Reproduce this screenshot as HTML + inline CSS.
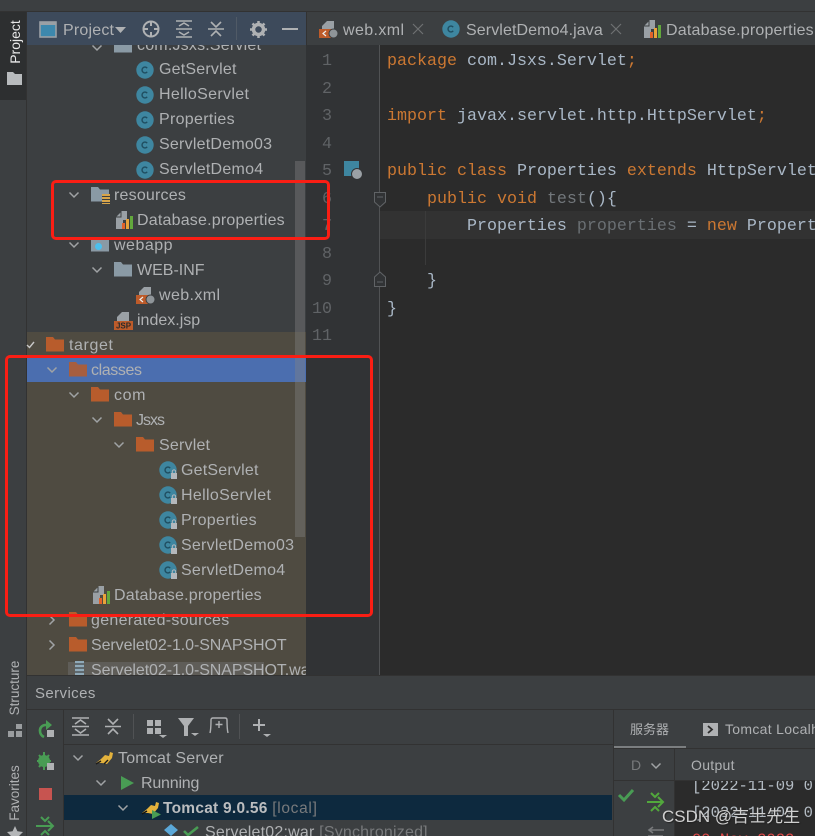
<!DOCTYPE html>
<html><head><meta charset="utf-8"><style>
html,body{margin:0;padding:0;width:815px;height:836px;overflow:hidden;background:#3c3f41}
#w{position:absolute;left:0;top:0;width:815px;height:836px;overflow:hidden;background:#3c3f41;font-family:"Liberation Sans","Noto Sans CJK SC",sans-serif;color:#afb1b3}
.a{position:absolute}
.t{position:absolute;font-size:16px;line-height:20px;white-space:nowrap;color:#afb1b3;margin-top:1px;letter-spacing:.2px}
.c{position:absolute;left:387px;font:16.67px/20px "Liberation Mono",monospace;white-space:pre;color:#a9b7c6;margin-top:2px}
.n{position:absolute;left:306px;width:26px;text-align:right;font:16.67px/20px "Liberation Mono",monospace;color:#606366;margin-top:2px}
.k{color:#cc7832}
.r{position:absolute;border:3.5px solid #fa1e14;border-radius:5px;box-sizing:border-box}
svg{position:absolute;overflow:visible}
</style></head><body><div id="w">
<svg width="0" height="0" style="position:absolute"><defs>
<symbol id="dn" viewBox="0 0 12 12"><path d="M1.5 3.5 6 8 10.5 3.5" fill="none" stroke="#a0a3a5" stroke-width="1.5"/></symbol>
<symbol id="rt" viewBox="0 0 12 12"><path d="M3.5 1.5 8 6 3.5 10.5" fill="none" stroke="#a0a3a5" stroke-width="1.5"/></symbol>
<symbol id="fo" viewBox="0 0 18 16"><path d="M0 0H7L9 2.500H18V14.500H0Z" fill="#b85c2c"/></symbol>
<symbol id="fg" viewBox="0 0 18 16"><path d="M0 0H7L9 2.500H18V14.500H0Z" fill="#8a9aa5"/></symbol>
<symbol id="cl" viewBox="0 0 18 18"><circle cx="9" cy="9" r="8.7" fill="#3e86a0"/><path d="M11.2 7.200A2.900 2.900 0 1 0 11.200 10.800" fill="none" stroke="#1f4d60" stroke-width="1.4"/></symbol>
<symbol id="cll" viewBox="0 0 18 18"><circle cx="9" cy="9" r="8.7" fill="#3e86a0"/><path d="M11.2 7.200A2.900 2.900 0 1 0 11.200 10.800" fill="none" stroke="#1f4d60" stroke-width="1.4"/><rect x="12" y="12" width="6" height="6" fill="#b4b8bc"/><path d="M13.300 12V10.600A1.700 1.700 0 0 1 16.700 10.600V12" fill="none" stroke="#b4b8bc" stroke-width="1"/></symbol>
<symbol id="pr" viewBox="0 0 17 18"><path d="M0 6 6 0H11V9H7V18H0Z" fill="#9aa0a5"/><path d="M5 1V6H0" fill="none" stroke="#3c3f41"/><rect x="6" y="12" width="3" height="6" fill="#e0622a"/><rect x="10" y="8" width="3" height="10" fill="#e8a33a"/><rect x="14" y="5" width="3" height="13" fill="#62a83c"/></symbol>
<symbol id="xm" viewBox="0 0 19 18"><path d="M3 6 8 1H15V9H3Z" fill="#9aa0a5"/><rect y="9" width="14" height="9" fill="#bd5b2a"/><path d="M7 11 4 13.500 7 16" fill="none" stroke="#eee" stroke-width="1.2"/><circle cx="14.500" cy="13.500" r="4.500" fill="#8f9599" stroke="#3c3f41"/></symbol>
</defs></svg>

<!-- top bar -->
<div class="a" style="left:0;top:0;width:815px;height:11px;background:#3c3f41;border-bottom:1px solid #323232"></div>
<!-- left stripe -->
<div class="a" style="left:0;top:12px;width:27px;height:88px;background:#2d2f30"></div>
<div class="a" style="left:26px;top:12px;width:1px;height:824px;background:#323232"></div>
<div class="t" style="left:-15px;top:32px;width:60px;text-align:center;font-size:14px;color:#e8e8e8;transform:rotate(-90deg);margin:0;letter-spacing:0">Project</div>
<svg style="left:7px;top:72px" width="15" height="13" viewBox="0 0 15 13"><path d="M0 0H6L8 2H15V13H0Z" fill="#b8bbbd"/></svg>

<!-- project tree bg -->
<div class="a" style="left:27px;top:12px;width:279px;height:664px;background:#3c3f41"></div>
<div class="a" style="left:27px;top:332px;width:279px;height:344px;background:#4f4b41"></div>
<div class="a" style="left:27px;top:357px;width:279px;height:25px;background:#4b6eaf"></div>

<!-- tree rows -->
<svg style="left:91px;top:42px" width="12" height="12"><use href="#dn"/></svg>
<svg style="left:114px;top:38px" width="18" height="16"><use href="#fg"/></svg>
<div class="t" style="left:137px;top:35px">com.Jsxs.Servlet</div>
<svg style="left:136px;top:61px" width="18" height="18"><use href="#cl"/></svg><div class="t" style="left:159px;top:59px">GetServlet</div>
<svg style="left:136px;top:86px" width="18" height="18"><use href="#cl"/></svg><div class="t" style="left:159px;top:84px;letter-spacing:.33px">HelloServlet</div>
<svg style="left:136px;top:111px" width="18" height="18"><use href="#cl"/></svg><div class="t" style="left:159px;top:109px;letter-spacing:.3px">Properties</div>
<svg style="left:136px;top:136px" width="18" height="18"><use href="#cl"/></svg><div class="t" style="left:159px;top:134px;letter-spacing:.23px">ServletDemo03</div>
<svg style="left:136px;top:161px" width="18" height="18"><use href="#cl"/></svg><div class="t" style="left:159px;top:159px;letter-spacing:.25px">ServletDemo4</div>
<svg style="left:68px;top:189px" width="12" height="12"><use href="#dn"/></svg>
<svg style="left:91px;top:187px" width="18" height="16"><use href="#fg"/></svg><div class="a" style="left:102px;top:194px;width:8px;height:10px;background:repeating-linear-gradient(#d8a54a 0 2px,#3c3f41 2px 3px)"></div>
<div class="t" style="left:114px;top:185px">resources</div>
<svg style="left:116px;top:211px" width="17" height="18"><use href="#pr"/></svg><div class="t" style="left:137px;top:210px">Database.properties</div>
<svg style="left:68px;top:239px" width="12" height="12"><use href="#dn"/></svg>
<svg style="left:91px;top:237px" width="18" height="16"><use href="#fg"/></svg><div class="a" style="left:95px;top:243px;width:7px;height:7px;border-radius:50%;background:#4cc0ee"></div>
<div class="t" style="left:114px;top:235px;letter-spacing:.5px">webapp</div>
<svg style="left:91px;top:264px" width="12" height="12"><use href="#dn"/></svg>
<svg style="left:114px;top:262px" width="18" height="16"><use href="#fg"/></svg><div class="t" style="left:137px;top:260px;letter-spacing:0">WEB-INF</div>
<svg style="left:136px;top:286px" width="19" height="18"><use href="#xm"/></svg><div class="t" style="left:159px;top:285px;letter-spacing:.4px">web.xml</div>
<svg style="left:114px;top:311px" width="19" height="19" viewBox="0 0 19 19"><path d="M3 6 8 1H15V10H3Z" fill="#9aa0a5"/><rect y="10" width="19" height="9" fill="#bd5b2a"/><text x="9.500" y="17.500" font-family="Liberation Sans" font-size="8" font-weight="bold" text-anchor="middle" fill="#2b2b2b">JSP</text></svg>
<div class="t" style="left:137px;top:310px;letter-spacing:0">index.jsp</div>

<svg style="left:26px;top:340px" width="9" height="9"><path d="M1 5 3.500 7.500 8 2" fill="none" stroke="#c8c8c8" stroke-width="1.4"/></svg>
<svg style="left:46px;top:337px" width="18" height="16"><use href="#fo"/></svg><div class="t" style="left:69px;top:335px;letter-spacing:.6px">target</div>
<svg style="left:46px;top:364px" width="12" height="12"><use href="#dn"/></svg>
<svg style="left:69px;top:362px" width="18" height="16"><use href="#fo" opacity=".85"/></svg><div class="t" style="left:91px;top:360px;letter-spacing:-.4px">classes</div>
<svg style="left:68px;top:389px" width="12" height="12"><use href="#dn"/></svg>
<svg style="left:91px;top:387px" width="18" height="16"><use href="#fo"/></svg><div class="t" style="left:114px;top:385px;letter-spacing:.6px">com</div>
<svg style="left:91px;top:414px" width="12" height="12"><use href="#dn"/></svg>
<svg style="left:114px;top:412px" width="18" height="16"><use href="#fo"/></svg><div class="t" style="left:136px;top:410px;letter-spacing:-1px">Jsxs</div>
<svg style="left:113px;top:439px" width="12" height="12"><use href="#dn"/></svg>
<svg style="left:136px;top:437px" width="18" height="16"><use href="#fo"/></svg><div class="t" style="left:159px;top:435px">Servlet</div>
<svg style="left:159px;top:461px" width="18" height="18"><use href="#cll"/></svg><div class="t" style="left:181px;top:460px">GetServlet</div>
<svg style="left:159px;top:486px" width="18" height="18"><use href="#cll"/></svg><div class="t" style="left:181px;top:485px;letter-spacing:.33px">HelloServlet</div>
<svg style="left:159px;top:511px" width="18" height="18"><use href="#cll"/></svg><div class="t" style="left:181px;top:510px;letter-spacing:.3px">Properties</div>
<svg style="left:159px;top:536px" width="18" height="18"><use href="#cll"/></svg><div class="t" style="left:181px;top:535px;letter-spacing:.23px">ServletDemo03</div>
<svg style="left:159px;top:561px" width="18" height="18"><use href="#cll"/></svg><div class="t" style="left:181px;top:560px;letter-spacing:.25px">ServletDemo4</div>
<svg style="left:93px;top:586px" width="17" height="18"><use href="#pr"/></svg><div class="t" style="left:114px;top:585px">Database.properties</div>
<svg style="left:46px;top:614px" width="12" height="12"><use href="#rt"/></svg>
<svg style="left:69px;top:612px" width="18" height="16"><use href="#fo"/></svg><div class="t" style="left:91px;top:610px;letter-spacing:.3px">generated-sources</div>
<svg style="left:46px;top:639px" width="12" height="12"><use href="#rt"/></svg>
<svg style="left:69px;top:637px" width="18" height="16"><use href="#fo"/></svg><div class="t" style="left:91px;top:635px;letter-spacing:-.08px">Servelet02-1.0-SNAPSHOT</div>
<div class="a" style="left:68px;top:662px;width:196px;height:14px;background:#5f5d58"></div>
<div class="a" style="left:75px;top:661px;width:9px;height:15px;background:repeating-linear-gradient(#8fa9b8 0 2px,#5f6a70 2px 4px)"></div>
<div class="a" style="left:91px;top:660px;width:215px;height:16px;overflow:hidden"><div class="t" style="left:0;top:0;letter-spacing:-.08px">Servelet02-1.0-SNAPSHOT.war</div></div>
<!-- scrollbar -->
<div class="a" style="left:295px;top:161px;width:10px;height:376px;background:rgba(130,130,130,.4)"></div>

<!-- project toolbar -->
<div class="a" style="left:27px;top:12px;width:279px;height:33px;background:#3d4a5b"></div>
<svg style="left:39px;top:21px" width="18" height="17"><rect x="1" y="1" width="16" height="15" fill="#3d88ad" stroke="#9aa0a5" stroke-width="1.6"/><rect x="1" y="1" width="16" height="3" fill="#9aa0a5"/></svg>
<div class="t" style="left:63px;top:20px">Project</div>
<svg style="left:115px;top:27px" width="11" height="6"><path d="M0 0H11L5.500 6Z" fill="#afb1b3"/></svg>
<svg style="left:142px;top:20px" width="18" height="18" fill="none" stroke="#afb1b3" stroke-width="2"><circle cx="9" cy="9" r="7.500"/><path d="M9 1V6M9 12V17M1 9H6M12 9H17"/></svg>
<svg style="left:176px;top:20px" width="16" height="18" fill="none" stroke="#afb1b3" stroke-width="2"><path d="M0 1H16M0 17H16M3 6 8 3 13 6M3 12 8 15 13 12M0 9H16" stroke-width="1.6"/></svg>
<svg style="left:208px;top:20px" width="16" height="18" fill="none" stroke="#afb1b3" stroke-width="1.6"><path d="M3 2 8 7 13 2M3 16 8 11 13 16M0 9H16"/></svg>
<div class="a" style="left:236px;top:17px;width:1px;height:23px;background:#505a66"></div>
<svg style="left:250px;top:21px" width="17" height="17" viewBox="0 0 17 17"><circle cx="8.500" cy="8.500" r="5" fill="none" stroke="#afb1b3" stroke-width="3.500"/><path d="M8.500 0V3M8.500 14V17M0 8.500H3M14 8.500H17M2.500 2.500 4.500 4.500M12.500 12.500 14.500 14.500M2.500 14.500 4.500 12.500M12.500 4.500 14.500 2.500" stroke="#afb1b3" stroke-width="2.500"/></svg>
<div class="a" style="left:282px;top:28px;width:16px;height:2px;background:#afb1b3"></div>

<!-- tabs -->
<div class="a" style="left:306px;top:12px;width:509px;height:33px;background:#3c3f41;border-left:1px solid #323232;box-sizing:border-box"></div>
<svg style="left:319px;top:20px" width="19" height="18"><use href="#xm"/></svg>
<div class="t" style="left:343px;top:20px;letter-spacing:.4px">web.xml</div>
<svg style="left:413px;top:24px" width="10" height="10"><path d="M0 0 10 10M10 0 0 10" stroke="#6e7173" stroke-width="1.2"/></svg>
<svg style="left:442px;top:20px" width="18" height="18"><use href="#cl"/></svg>
<div class="t" style="left:466px;top:20px;letter-spacing:.1px">ServletDemo4.java</div>
<svg style="left:611px;top:24px" width="10" height="10"><path d="M0 0 10 10M10 0 0 10" stroke="#6e7173" stroke-width="1.2"/></svg>
<svg style="left:644px;top:20px" width="17" height="18"><use href="#pr"/></svg>
<div class="t" style="left:666px;top:20px">Database.properties</div>

<!-- editor -->
<div class="a" style="left:306px;top:45px;width:509px;height:630px;background:#2b2b2b"></div>
<div class="a" style="left:306px;top:45px;width:74px;height:630px;background:#313335"></div>
<div class="a" style="left:379px;top:45px;width:1px;height:630px;background:#505254"></div>
<div class="a" style="left:380px;top:211px;width:435px;height:28px;background:#323232"></div>
<div class="a" style="left:425px;top:211px;width:1px;height:54px;background:#3b3b3b"></div>
<div class="n" style="top:50px">1</div><div class="n" style="top:78px">2</div><div class="n" style="top:105px">3</div><div class="n" style="top:133px">4</div><div class="n" style="top:160px">5</div><div class="n" style="top:188px">6</div><div class="n" style="top:215px">7</div><div class="n" style="top:243px">8</div><div class="n" style="top:270px">9</div><div class="n" style="top:298px">10</div><div class="n" style="top:325px">11</div>
<div class="a" style="left:344px;top:161px;width:15px;height:15px;background:#3e86a0"></div>
<div class="a" style="left:351px;top:168px;width:10px;height:10px;border-radius:50%;background:#9aa0a5;border:1px solid #313335"></div>
<svg style="left:374px;top:192px" width="12" height="16" fill="#313335" stroke="#606366"><path d="M.5.5H11.500V10L6 15 .5 10ZM3 5H9"/></svg>
<svg style="left:374px;top:271px" width="12" height="16" fill="#313335" stroke="#606366"><path d="M.5 15.500H11.500V6L6 1 .5 6ZM3 11H9"/></svg>
<div class="c" style="top:50px"><span class="k">package</span> com.Jsxs.Servlet<span class="k">;</span></div>
<div class="c" style="top:105px"><span class="k">import</span> javax.servlet.http.HttpServlet<span class="k">;</span></div>
<div class="c" style="top:160px"><span class="k">public class</span> Properties <span class="k">extends</span> HttpServlet</div>
<div class="c" style="top:188px">    <span class="k">public void</span> <span style="color:#72777b">test</span>(){</div>
<div class="c" style="top:215px">        Properties <span style="color:#6a6f73">properties</span> = <span class="k">new</span> Propert</div>
<div class="c" style="top:270px">    }</div>
<div class="c" style="top:298px">}</div>

<!-- bottom panel -->
<div class="a" style="left:27px;top:675px;width:788px;height:161px;background:#3c3f41;border-top:1px solid #323232;box-sizing:border-box"></div>
<div class="t" style="left:35px;top:683px;font-size:15px;letter-spacing:.4px;margin-top:.5px">Services</div>
<div class="a" style="left:27px;top:709px;width:788px;height:1px;background:#323232"></div>
<div class="a" style="left:63px;top:710px;width:1px;height:126px;background:#323232"></div>
<div class="a" style="left:63px;top:744px;width:550px;height:1px;background:#323232"></div>
<div class="a" style="left:613px;top:710px;width:1px;height:126px;background:#323232"></div>
<!-- stripe bottom -->
<div class="t" style="left:-15px;top:678px;width:60px;text-align:center;font-size:13.5px;transform:rotate(-90deg);margin:0;letter-spacing:0">Structure</div>
<svg style="left:8px;top:724px" width="14" height="13"><path d="M0 7H6V13H0ZM8 7H14V13H8ZM8 0H14V5H8Z" fill="#9a9d9f"/></svg>
<div class="t" style="left:-15px;top:783px;width:60px;text-align:center;font-size:13.5px;transform:rotate(-90deg);margin:0;letter-spacing:0">Favorites</div>
<svg style="left:7px;top:826px" width="16" height="15"><path d="M8 0 10.400 5.300 16 6 12 10 13 15.500 8 13 3 15.500 4 10 0 6 5.600 5.300Z" fill="#b4b6b8"/></svg>
<!-- side actions -->
<svg style="left:37px;top:720px" width="18" height="18" fill="none"><path d="M13 5H8A5.500 5.500 0 0 0 3 11C3 14 5 16 7 17" stroke="#499c54" stroke-width="2.600"/><path d="M9 0 15 5 9 10Z" fill="#499c54"/><rect x="10" y="10" width="7" height="7" fill="#afb1b3"/></svg>
<svg style="left:37px;top:752px" width="18" height="19"><circle cx="7" cy="9" r="6" fill="#499c54"/><path d="M7 0V18M0 9H14M2 3 12 15M2 15 12 3" stroke="#499c54" stroke-width="2"/><rect x="10" y="11" width="7" height="7" fill="#afb1b3"/></svg>
<div class="a" style="left:39px;top:788px;width:13px;height:12px;background:#c75450"></div>
<svg style="left:36px;top:816px" width="19" height="20" fill="none" stroke="#499c54" stroke-width="2"><path d="M0 10H17M12 5 17 10 12 15M5 1 9 5 13 1M5 19 9 15 13 19"/></svg>
<!-- services toolbar -->
<svg style="left:72px;top:717px" width="17" height="19" fill="none" stroke="#afb1b3" stroke-width="1.600"><path d="M0 1H17M0 18H17M3 7 8.500 3 14 7M3 12 8.500 16 14 12M0 9.500H17"/></svg>
<svg style="left:105px;top:718px" width="16" height="17" fill="none" stroke="#afb1b3" stroke-width="1.600"><path d="M3 1 8 6 13 1M3 16 8 11 13 16M0 8.500H16"/></svg>
<div class="a" style="left:133px;top:714px;width:1px;height:25px;background:#505254"></div>
<svg style="left:147px;top:720px" width="22" height="19"><path d="M0 0H6V6H0ZM8 0H14V6H8ZM0 8H6V14H0ZM8 8H14V14H8Z" fill="#afb1b3"/><path d="M12 15H20L16 18Z" fill="#afb1b3"/></svg>
<svg style="left:178px;top:718px" width="22" height="20"><path d="M0 0H16L10 8V18H6V8Z" fill="#afb1b3"/><path d="M13 15H21L17 18Z" fill="#afb1b3"/></svg>
<svg style="left:209px;top:717px" width="20" height="17" fill="none" stroke="#afb1b3" stroke-width="1.400"><path d="M1 16C2 12 2 6 2 3Q2 1 4 1H16Q18 1 18 3C18 6 18 12 19 16M10 4V11M6.500 7.500H13.500"/></svg>
<div class="a" style="left:239px;top:714px;width:1px;height:25px;background:#505254"></div>
<svg style="left:253px;top:719px" width="18" height="20"><path d="M6 0V12M0 6H12" stroke="#afb1b3" stroke-width="2"/><path d="M10 15H18L14 18Z" fill="#afb1b3"/></svg>
<!-- services tree -->
<div class="a" style="left:64px;top:795px;width:548px;height:25px;background:#0d293e"></div>
<svg style="left:72px;top:752px" width="12" height="12"><use href="#dn"/></svg>
<svg style="left:96px;top:752px" width="18" height="13"><path d="M0 11 5 7 9 3 13 4 14 0 17 1 16 6 11 12 6 11Z" fill="#e3b23c"/><path d="M0 12 5 9M8 12 12 8" stroke="#1c1c1c" stroke-width="1.400"/></svg>
<div class="t" style="left:118px;top:748px">Tomcat Server</div>
<svg style="left:95px;top:777px" width="12" height="12"><use href="#dn"/></svg>
<svg style="left:121px;top:776px" width="13" height="14"><path d="M0 0 13 7 0 14Z" fill="#499c54"/></svg>
<div class="t" style="left:141px;top:773px;letter-spacing:-.2px">Running</div>
<svg style="left:117px;top:802px" width="12" height="12"><use href="#dn"/></svg>
<svg style="left:142px;top:802px" width="18" height="13"><path d="M0 11 5 7 9 3 13 4 14 0 17 1 16 6 11 12 6 11Z" fill="#e3b23c"/><path d="M0 12 5 9" stroke="#111" stroke-width="1.400"/></svg>
<svg style="left:152px;top:810px" width="9" height="9"><path d="M0 0 9 4.500 0 9Z" fill="#499c54"/></svg>
<div class="t" style="left:163px;top:798px;font-weight:bold;font-size:15.5px;letter-spacing:.25px;color:#bbbdbf">Tomcat 9.0.56 <span style="font-weight:normal;color:#787a7c;letter-spacing:.7px">[local]</span></div>
<svg style="left:162px;top:824px" width="18" height="12"><path d="M9 0 16 6 9 12 2 6Z" fill="#5ba8d8"/></svg>
<svg style="left:183px;top:827px" width="16" height="9" fill="none"><path d="M1 4 5 8 15 0" stroke="#499c54" stroke-width="2.600"/></svg>
<div class="t" style="left:205px;top:822px">Servelet02:war <span style="color:#787a7c">[Synchronized]</span></div>

<!-- right panel -->
<div class="t" style="left:630px;top:719px;font-size:13px;letter-spacing:0">服务器</div>
<div class="a" style="left:614px;top:746px;width:72px;height:3px;background:#7b7e80"></div>
<div class="a" style="left:614px;top:748px;width:201px;height:1px;background:#323232"></div>
<div class="a" style="left:703px;top:723px;width:15px;height:13px;background:#afb1b3"></div>
<svg style="left:707px;top:725px" width="7" height="9" fill="none"><path d="M1 1 5 4.500 1 8" stroke="#2b2b2b" stroke-width="1.800"/></svg>
<div class="t" style="left:725px;top:719px;font-size:14px;letter-spacing:.3px;margin:0">Tomcat Localh</div>
<div class="t" style="left:631px;top:755px;font-size:14px;color:#787a7c;margin:0">D</div>
<svg style="left:650px;top:760px" width="12" height="12"><use href="#dn"/></svg>
<div class="a" style="left:674px;top:749px;width:1px;height:87px;background:#323232"></div>
<div class="t" style="left:691px;top:755px;font-size:14px;letter-spacing:.3px;margin:0">Output</div>
<div class="a" style="left:614px;top:780px;width:201px;height:1px;background:#323232"></div>
<div class="a" style="left:675px;top:781px;width:140px;height:55px;background:#2b2b2b"></div>
<svg style="left:618px;top:789px" width="16" height="13" fill="none"><path d="M1 6 6 11 15 1" stroke="#499c54" stroke-width="3"/></svg>
<svg style="left:647px;top:792px" width="18" height="20" fill="none" stroke="#52a83c" stroke-width="2"><path d="M0 10H16M11 5 16 10 11 15M4 1 8 5 12 1M4 19 8 15 12 19"/></svg>
<svg style="left:647px;top:827px" width="18" height="12" fill="none" stroke="#787a7c" stroke-width="1.600"><path d="M17 3H2M6 0 2 3 6 6M1 9H16"/></svg>
<div class="a" style="left:675px;top:781px;width:140px;height:55px;overflow:hidden">
<div class="c" style="left:17px;top:-5px;margin:0;color:#b4bcc4;font-size:15.5px">[2022-11-09 0</div>
<div class="c" style="left:17px;top:22px;margin:0;color:#b4bcc4;font-size:15.5px">[2022-11-09 0</div>
<div class="c" style="left:17px;top:49px;margin:0;color:#e04a4a;font-size:15.5px">09-Nov-2022</div>
</div>
<div class="t" style="left:662px;top:807px;font-size:17px;letter-spacing:0;margin:0;color:#cfcfcf;text-shadow:1px 1px 1px #222">CSDN @吉士先生</div>

<!-- red annotation boxes -->
<div class="r" style="left:51px;top:180px;width:279px;height:60px"></div>
<div class="r" style="left:5px;top:355px;width:368px;height:262px"></div>
</div></body></html>
